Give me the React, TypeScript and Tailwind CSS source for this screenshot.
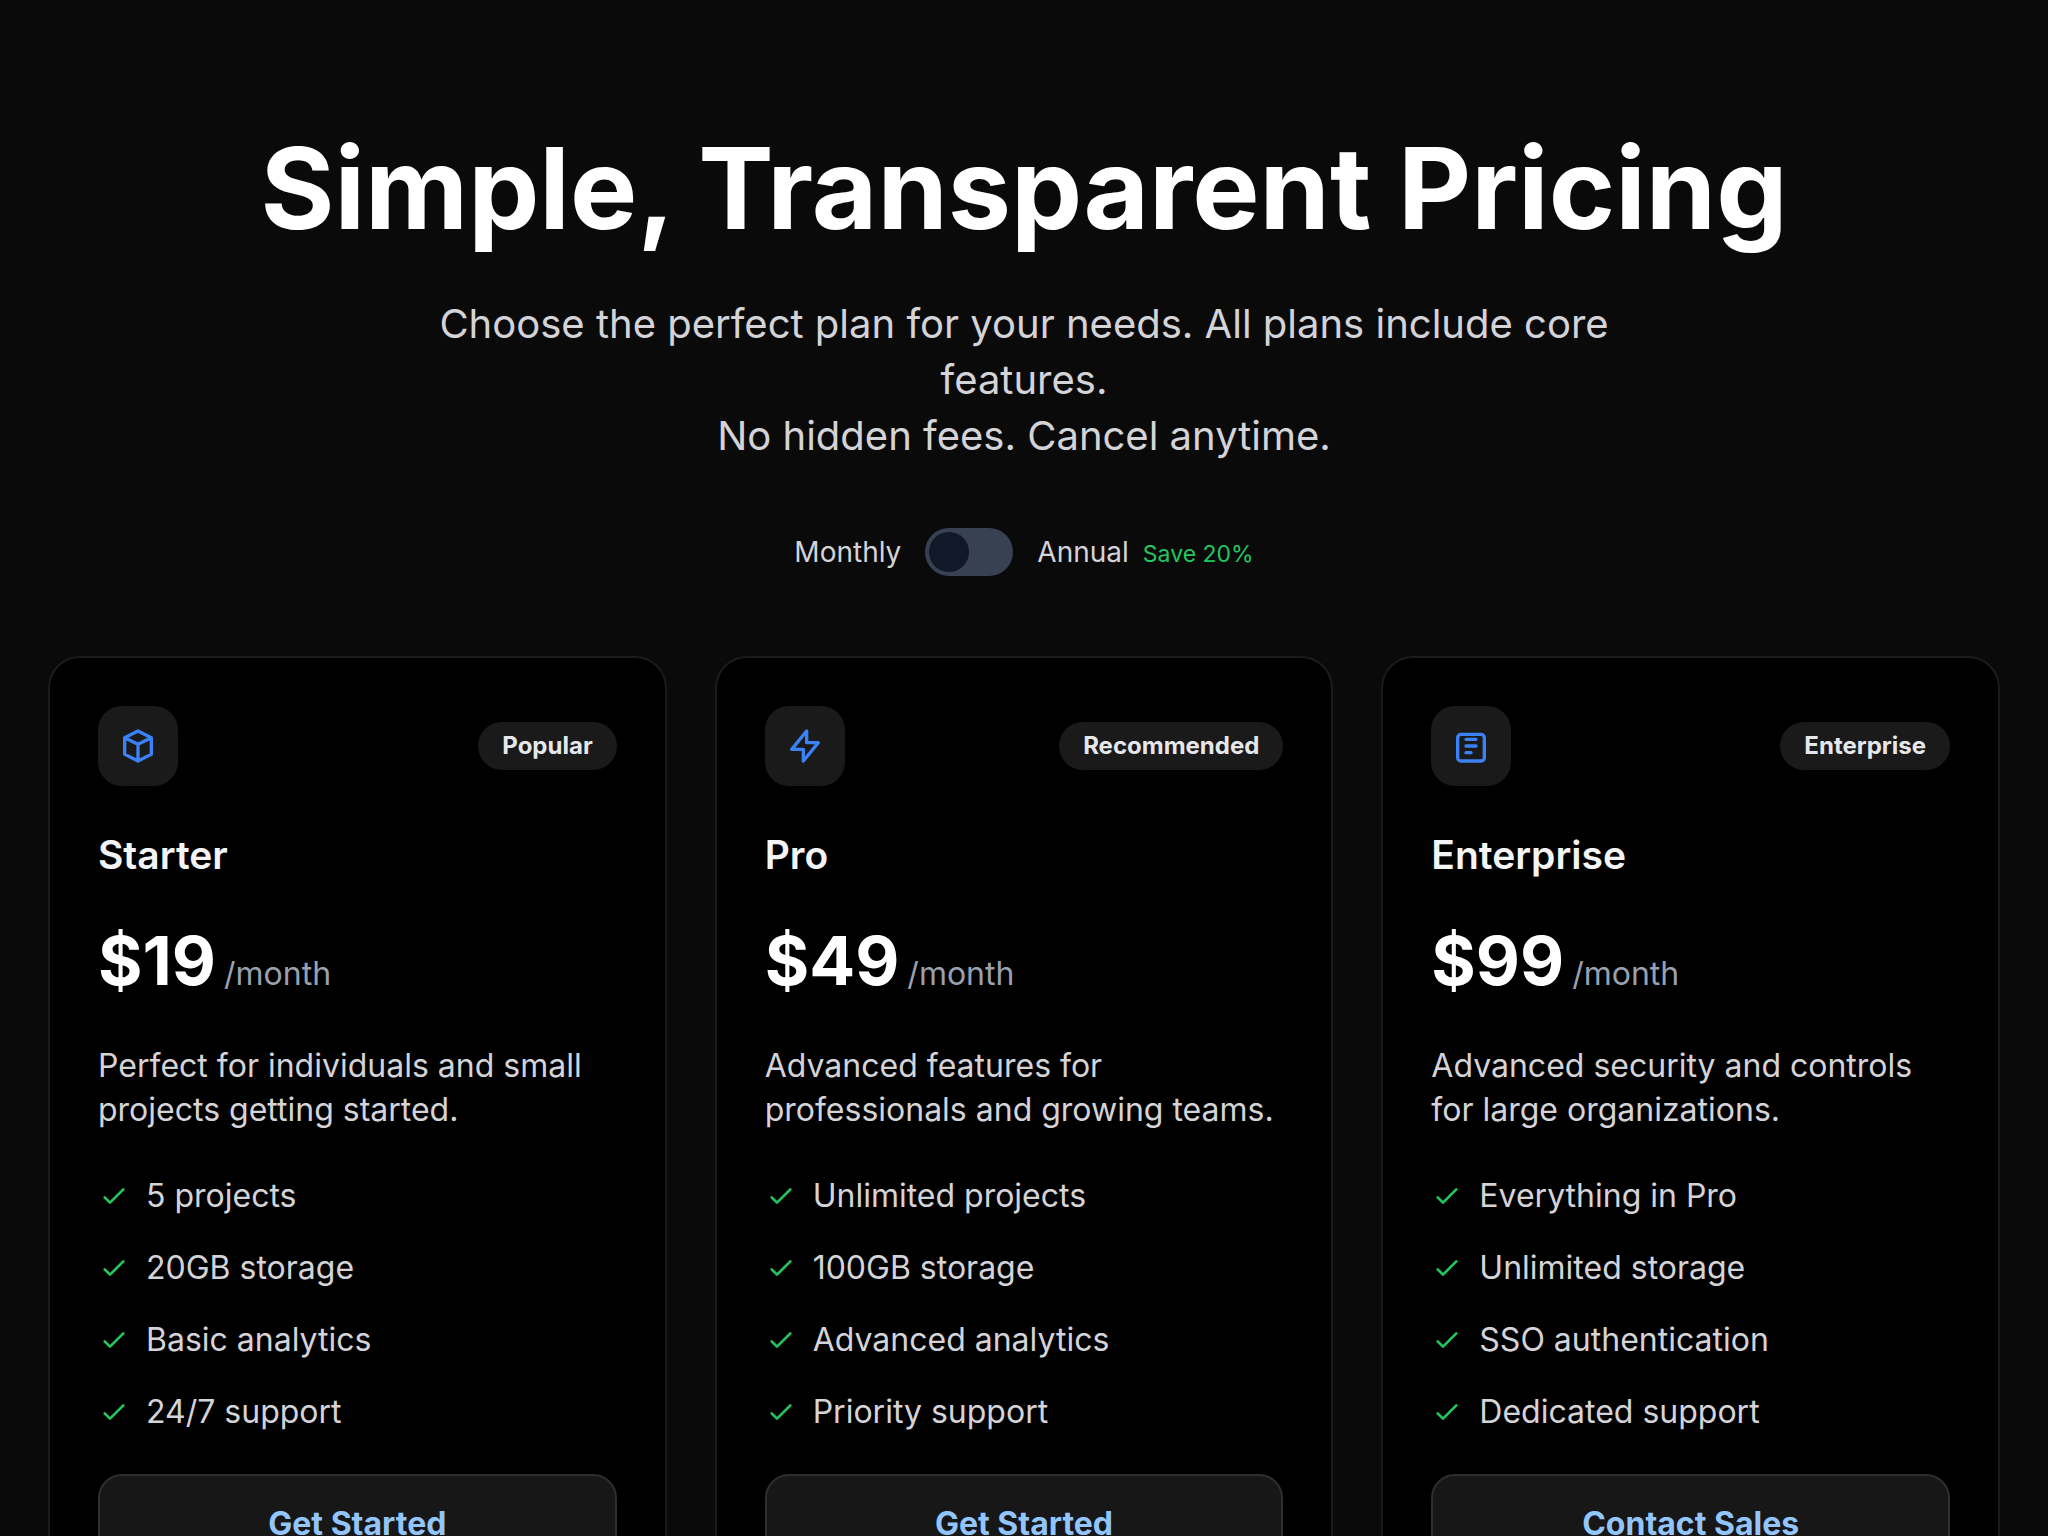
import { useState } from 'react'
import type { ReactNode } from 'react'

type Plan = {
  name: string
  badge: string
  price: number
  description: string
  features: string[]
  cta: string
  icon: ReactNode
}

const plans: Plan[] = [
  {
    name: 'Starter',
    badge: 'Popular',
    price: 19,
    description: 'Perfect for individuals and small projects getting started.',
    features: ['5 projects', '20GB storage', 'Basic analytics', '24/7 support'],
    cta: 'Get Started',
    icon: <path d="M20 7l-8-4-8 4m16 0l-8 4m8-4v10l-8 4m0-10L4 7m8 4v10M4 7v10l8 4" />,
  },
  {
    name: 'Pro',
    badge: 'Recommended',
    price: 49,
    description: 'Advanced features for professionals and growing teams.',
    features: ['Unlimited projects', '100GB storage', 'Advanced analytics', 'Priority support'],
    cta: 'Get Started',
    icon: <path d="M13 10V3L4 14h7v7l9-11h-7z" />,
  },
  {
    name: 'Enterprise',
    badge: 'Enterprise',
    price: 99,
    description: 'Advanced security and controls for large organizations.',
    features: ['Everything in Pro', 'Unlimited storage', 'SSO authentication', 'Dedicated support'],
    cta: 'Contact Sales',
    icon: (
      <>
        <rect x="4" y="5" width="16" height="16" rx="2" />
        <path d="M9 8h6M9 12h6M9 16h3" />
      </>
    ),
  },
]

const PlanCard = ({ plan, annual }: { plan: Plan; annual: boolean }) => {
  const price = annual ? Math.round(plan.price * 0.8) : plan.price

  return (
    <article className="flex flex-col bg-black border-2 border-[#1b1b1b] rounded-[32px] p-12">
      <div className="flex items-center justify-between mb-10">
        <div className="w-20 h-20 rounded-3xl bg-[#1a1a1a] flex items-center justify-center">
          <svg
            className="w-10 h-10 text-[#3b82f6]"
            viewBox="0 0 24 24"
            fill="none"
            stroke="currentColor"
            strokeWidth="2"
            strokeLinecap="round"
            strokeLinejoin="round"
          >
            {plan.icon}
          </svg>
        </div>
        <span className="h-12 px-6 flex items-center rounded-full bg-[#1a1a1a] text-gray-200 text-2xl font-bold">
          {plan.badge}
        </span>
      </div>

      <h2 className="text-[39px] leading-[58px] font-semibold text-gray-100 mb-9">{plan.name}</h2>

      <div className="flex items-baseline gap-2 mb-11">
        <span className="text-[68px] leading-[80px] font-bold text-white">${price}</span>
        <span className="text-[32px] text-gray-400">/month</span>
      </div>

      <p className="text-[32px] leading-[44px] text-[#d4d4d8] mb-10">{plan.description}</p>

      <ul className="flex flex-col gap-6 mb-[38px]">
        {plan.features.map((feature) => (
          <li key={feature} className="flex items-center gap-4 text-[32px] leading-[48px] text-[#d4d4d8]">
            <svg
              className="w-8 h-8 text-[#22c55e]"
              viewBox="0 0 24 24"
              fill="none"
              stroke="currentColor"
              strokeWidth="2"
              strokeLinecap="round"
              strokeLinejoin="round"
            >
              <path d="M5 13l4 4L19 7" />
            </svg>
            {feature}
          </li>
        ))}
      </ul>

      <button className="w-full h-[100px] rounded-3xl border-2 border-[#2e2e2e] bg-[#171717] text-[32px] font-bold text-[#93c5fd]">
        {plan.cta}
      </button>
    </article>
  )
}

const App = () => {
  const [annual, setAnnual] = useState(false)

  return (
    <main className="min-h-screen bg-[#0a0a0a] px-12 py-32 font-['Inter',sans-serif]">
      <header className="flex flex-col items-center text-center mb-20">
        <h1 className="text-[113px] leading-[120px] font-bold text-white mb-12">
          Simple, Transparent Pricing
        </h1>
        <p className="max-w-[1344px] text-[40px] leading-[56px] text-[#d4d4d8] mb-16">
          Choose the perfect plan for your needs. All plans include core features.
          <br />
          No hidden fees. Cancel anytime.
        </p>
        <div className="flex items-center gap-6 text-[28px] leading-[48px] text-[#d4d4d8]">
          <span>Monthly</span>
          <button
            role="switch"
            aria-checked={annual}
            aria-label="Annual billing"
            onClick={() => setAnnual(!annual)}
            className={`w-[88px] h-12 p-1 flex rounded-full bg-[#374151] ${annual ? 'justify-end' : 'justify-start'}`}
          >
            <span className="w-10 h-10 rounded-full bg-[#111827]" />
          </button>
          <span className="flex items-baseline gap-3.5">
            Annual
            <span className="text-[23px] leading-8 text-[#22c55e]">Save 20%</span>
          </span>
        </div>
      </header>

      <section className="grid grid-cols-3 gap-12">
        {plans.map((plan) => (
          <PlanCard key={plan.name} plan={plan} annual={annual} />
        ))}
      </section>
    </main>
  )
}

export default App
